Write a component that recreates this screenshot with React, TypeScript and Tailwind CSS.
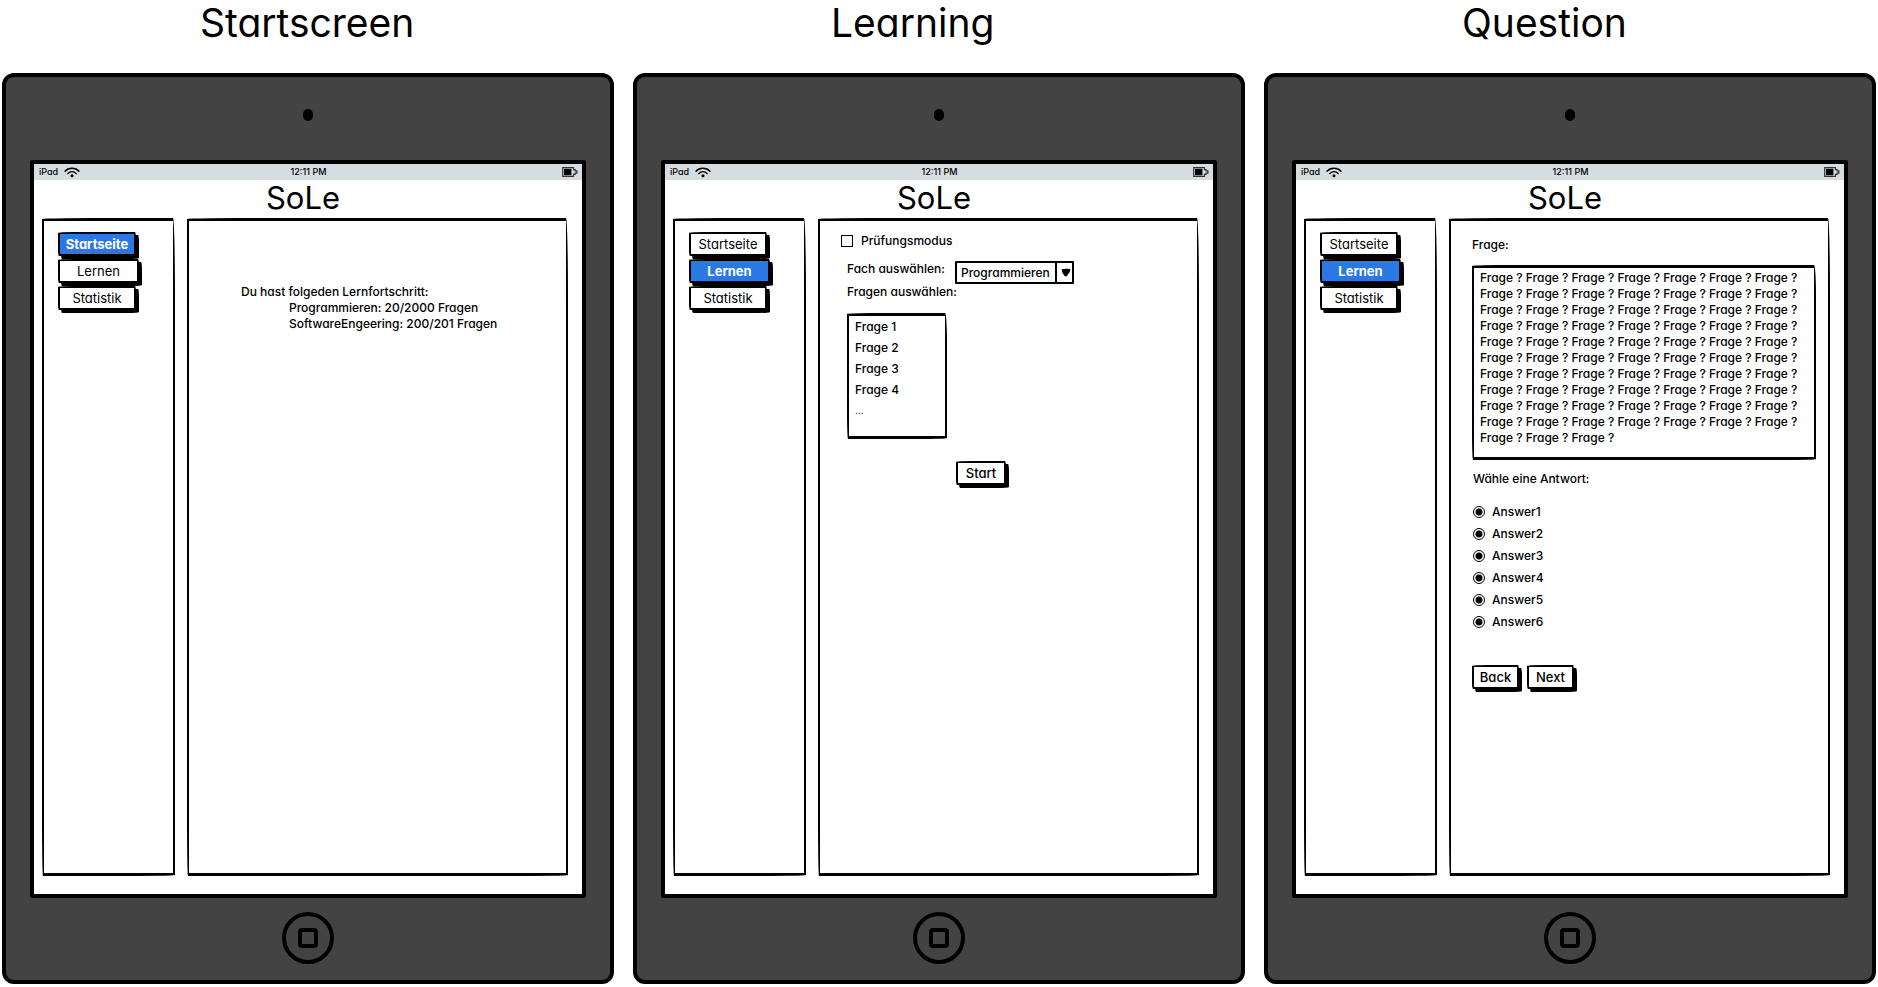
import type { ReactNode } from "react";

type Page = "Startseite" | "Lernen" | "Statistik";

const pages: { name: Page; width: string }[] = [
  { name: "Startseite", width: "w-[78px]" },
  { name: "Lernen", width: "w-[81px]" },
  { name: "Statistik", width: "w-[78px]" },
];

// Long, flat corner radii bow the edges a little, like lines drawn by hand.
const sketchPanel = "border-x-2 border-y-[3px] border-black rounded-[80px_2px_60px_1px/1px_80px_1px_60px]";
const sketchBox = "border-x-2 border-y-[3px] border-black rounded-[40px_2px_30px_1px/1px_30px_1px_30px]";

function SketchButton({ children, width, active = false }: { children: ReactNode; width: string; active?: boolean }) {
  return (
    <button
      type="button"
      className={`h-6 rounded-[16px_1px_12px_1px/1px_8px_1px_6px] border-2 border-black text-center text-[13px] leading-5 shadow-[3px_3px_0_0_#000] ${width} ${
        active ? "bg-[#2a78e4] font-bold text-white" : "bg-white"
      }`}
    >
      {children}
    </button>
  );
}

function WifiIcon() {
  return (
    <svg viewBox="0 0 16 11" className="h-[11px] w-4" fill="none" stroke="black" strokeLinecap="round" aria-hidden="true">
      <path d="M1 4.3C4.6.2 11.4.2 15 4.3" strokeWidth="1.4" />
      <path d="M3.8 6.6c2.3-2.6 6.1-2.6 8.4 0" strokeWidth="1.4" />
      <circle cx="8" cy="8.8" r="1.5" fill="black" stroke="none" />
    </svg>
  );
}

function BatteryIcon() {
  return (
    <svg viewBox="0 0 16 10" className="h-[10px] w-4" fill="none" stroke="#333" aria-hidden="true">
      <path d="M.7.7h10.8v2h1.6v1.2h1.8v2.2h-1.8v1.2h-1.6v2H.7z" strokeWidth="1.2" />
      <rect x="2" y="1.8" width="7.4" height="6.4" fill="black" stroke="none" />
    </svg>
  );
}

function Tablet({ title, active, children }: { title: string; active: Page; children: ReactNode }) {
  return (
    <section>
      <h2 className="h-[73px] pl-[198px] text-[39px] leading-[46px]">{title}</h2>
      <div className="rounded-[12px] border-4 border-black bg-[#434343] px-6">
        <div className="flex h-[83px] justify-center pt-8">
          <span className="h-3 w-[10px] rounded-full bg-black" />
        </div>
        <div className="rounded-[2px] border-4 border-black bg-white">
          <div className="grid h-4 grid-cols-3 items-center bg-[#d6dde0] pr-1 pl-[5px] text-[9px] leading-4 font-medium">
            <span className="flex items-center gap-[6px]">
              iPad <WifiIcon />
            </span>
            <span className="text-center">12:11 PM</span>
            <span className="flex justify-end">
              <BatteryIcon />
            </span>
          </div>
          <h1 className="h-[38px] pr-[10px] text-center text-[31px] leading-9">SoLe</h1>
          <div className="flex min-h-[676px] gap-3 pr-[14px] pb-[18px] pl-2">
            <nav className={`flex w-[133px] flex-none flex-col gap-[3px] pt-[11px] pl-[14px] ${sketchPanel}`}>
              {pages.map((p) => (
                <SketchButton key={p.name} width={p.width} active={p.name === active}>
                  {p.name}
                </SketchButton>
              ))}
            </nav>
            <main className={`min-w-0 flex-1 text-xs leading-4 font-medium ${sketchPanel}`}>{children}</main>
          </div>
        </div>
        <div className="flex h-[82px] justify-center pt-[14px]">
          <button type="button" aria-label="Home" className="flex size-[52px] items-center justify-center rounded-full border-4 border-black">
            <span className="size-5 rounded-[4px] border-4 border-black" />
          </button>
        </div>
      </div>
    </section>
  );
}

function StartScreen() {
  return (
    <div className="pt-[63px] pl-[52px]">
      <p>Du hast folgeden Lernfortschritt:</p>
      <ul className="pl-12">
        <li>Programmieren: 20/2000 Fragen</li>
        <li>SoftwareEngeering: 200/201 Fragen</li>
      </ul>
    </div>
  );
}

function LearningScreen() {
  return (
    <form className="pt-3 pl-[27px]">
      <label className="-ml-[6px] flex items-center gap-2">
        <input type="checkbox" className="size-3 appearance-none border border-black bg-white checked:bg-black" />
        Prüfungsmodus
      </label>
      <div className="flex pt-3">
        <label htmlFor="fach" className="w-[108px] whitespace-nowrap">
          Fach auswählen:
        </label>
        <div className="relative">
          <select id="fach" className="h-[23px] w-[119px] appearance-none rounded-[1px] border-2 border-black bg-white pl-1 leading-4">
            <option>Programmieren</option>
          </select>
          <span className="pointer-events-none absolute top-0 right-0 flex h-[23px] w-[19px] items-center justify-center border-l-2 border-black">
            <svg viewBox="0 0 10 9" className="h-[9px] w-[10px]" aria-hidden="true">
              <path d="M.6 1.2 4.8.8l4.6.3-.7 3L5.4 8.4 3.7 8 1.5 5z" />
            </svg>
          </span>
        </div>
      </div>
      <p id="fragen">Fragen auswählen:</p>
      <ul aria-labelledby="fragen" className={`mt-[13px] h-[126px] w-[100px] pl-[6px] leading-[21px] ${sketchBox}`}>
        <li>Frage 1</li>
        <li>Frage 2</li>
        <li>Frage 3</li>
        <li>Frage 4</li>
        <li className="text-[10px] font-normal">...</li>
      </ul>
      <div className="pt-[22px] pl-[109px]">
        <SketchButton width="w-[50px]">Start</SketchButton>
      </div>
    </form>
  );
}

const question = Array.from({ length: 73 }, () => "Frage ?").join(" ");
const answers = ["Answer1", "Answer2", "Answer3", "Answer4", "Answer5", "Answer6"];

function QuestionScreen() {
  return (
    <form className="pt-4 pr-3 pl-[21px]">
      <p>Frage:</p>
      <p className={`mt-3 h-[195px] pt-[2px] pl-[6px] ${sketchBox}`}>{question}</p>
      <fieldset className="pl-px">
        <legend className="pt-[11px] pb-[14px]">Wähle eine Antwort:</legend>
        {answers.map((a) => (
          <label key={a} className="flex h-[22px] items-center gap-[7px]">
            <input
              type="radio"
              name={a}
              defaultChecked
              className="size-3 appearance-none rounded-full border border-black bg-white checked:bg-[radial-gradient(circle,#000_3px,#fff_4px)]"
            />
            {a}
          </label>
        ))}
      </fieldset>
      <div className="flex gap-2 pt-8">
        <SketchButton width="w-[47px]">Back</SketchButton>
        <SketchButton width="w-[47px]">Next</SketchButton>
      </div>
    </form>
  );
}

export default function App() {
  return (
    <div className="grid grid-cols-3 gap-[19px] bg-white px-[2px] pb-[3px] font-['Inter',sans-serif] text-black [font-feature-settings:'cv11']">
      <Tablet title="Startscreen" active="Startseite">
        <StartScreen />
      </Tablet>
      <Tablet title="Learning" active="Lernen">
        <LearningScreen />
      </Tablet>
      <Tablet title="Question" active="Lernen">
        <QuestionScreen />
      </Tablet>
    </div>
  );
}
